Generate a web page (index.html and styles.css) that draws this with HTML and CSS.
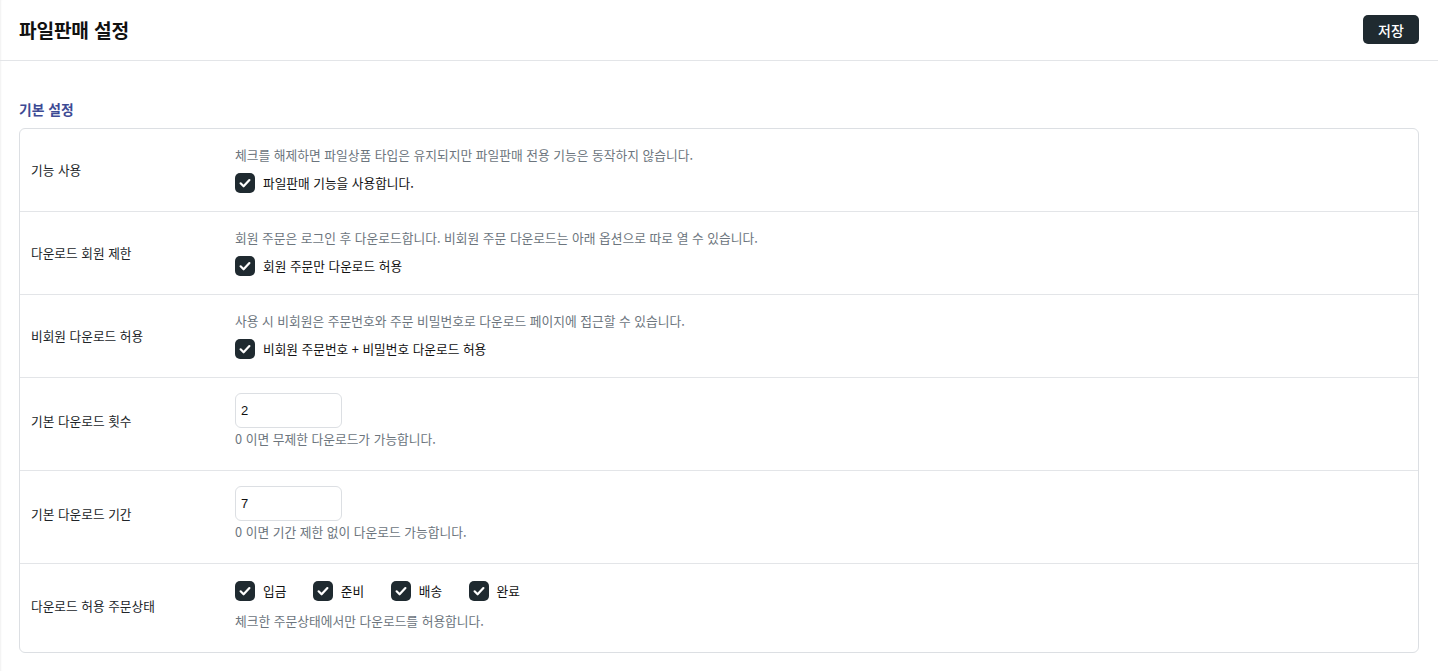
FILE: index.html
```html
<!DOCTYPE html>
<html lang="ko">
<head>
<meta charset="utf-8">
<title>파일판매 설정</title>
<link rel="stylesheet" href="styles.css">
</head>
<body>
<header class="topbar">
  <h1 class="page-title">파일판매 설정</h1>
  <button class="btn-save" type="button">저장</button>
</header>
<main class="content">
  <h2 class="section-title">기본 설정</h2>
  <div class="card">
    <div class="row">
      <div class="label">기능 사용</div>
      <div class="field">
        <p class="desc">체크를 해제하면 파일상품 타입은 유지되지만 파일판매 전용 기능은 동작하지 않습니다.</p>
        <label class="check"><span class="box"><svg viewBox="0 0 20 20"><path d="M5.6 10.3l3 3 5.8-6.2"/></svg></span>파일판매 기능을 사용합니다.</label>
      </div>
    </div>
    <div class="row">
      <div class="label">다운로드 회원 제한</div>
      <div class="field">
        <p class="desc">회원 주문은 로그인 후 다운로드합니다. 비회원 주문 다운로드는 아래 옵션으로 따로 열 수 있습니다.</p>
        <label class="check"><span class="box"><svg viewBox="0 0 20 20"><path d="M5.6 10.3l3 3 5.8-6.2"/></svg></span>회원 주문만 다운로드 허용</label>
      </div>
    </div>
    <div class="row">
      <div class="label">비회원 다운로드 허용</div>
      <div class="field">
        <p class="desc">사용 시 비회원은 주문번호와 주문 비밀번호로 다운로드 페이지에 접근할 수 있습니다.</p>
        <label class="check"><span class="box"><svg viewBox="0 0 20 20"><path d="M5.6 10.3l3 3 5.8-6.2"/></svg></span>비회원 주문번호 + 비밀번호 다운로드 허용</label>
      </div>
    </div>
    <div class="row row-input">
      <div class="label">기본 다운로드 횟수</div>
      <div class="field">
        <input class="num" type="text" value="2">
        <p class="help">0 이면 무제한 다운로드가 가능합니다.</p>
      </div>
    </div>
    <div class="row row-input">
      <div class="label">기본 다운로드 기간</div>
      <div class="field">
        <input class="num" type="text" value="7">
        <p class="help">0 이면 기간 제한 없이 다운로드 가능합니다.</p>
      </div>
    </div>
    <div class="row row-status">
      <div class="label">다운로드 허용 주문상태</div>
      <div class="field">
        <div class="check-group">
          <label class="check"><span class="box"><svg viewBox="0 0 20 20"><path d="M5.6 10.3l3 3 5.8-6.2"/></svg></span>입금</label>
          <label class="check"><span class="box"><svg viewBox="0 0 20 20"><path d="M5.6 10.3l3 3 5.8-6.2"/></svg></span>준비</label>
          <label class="check"><span class="box"><svg viewBox="0 0 20 20"><path d="M5.6 10.3l3 3 5.8-6.2"/></svg></span>배송</label>
          <label class="check"><span class="box"><svg viewBox="0 0 20 20"><path d="M5.6 10.3l3 3 5.8-6.2"/></svg></span>완료</label>
        </div>
        <p class="help help-status">체크한 주문상태에서만 다운로드를 허용합니다.</p>
      </div>
    </div>
  </div>
</main>
</body>
</html>
```
FILE: styles.css
```css
* { box-sizing: border-box; }
html, body { margin: 0; padding: 0; }
body {
  background: #fff;
  font-family: "Noto Sans CJK KR", "Noto Sans", sans-serif;
  color: #212529;
  box-shadow: inset 2px 0 2px -1px rgba(0,0,0,0.06);
  min-height: 671px;
}
.topbar {
  height: 61px;
  border-bottom: 1px solid #e3e5e8;
  display: flex;
  align-items: center;
  justify-content: space-between;
  padding: 0 19px 1px 19px;
}
.page-title {
  margin: 0;
  font-size: 19.2px;
  font-weight: 700;
  color: #111;
  letter-spacing: -0.2px;
}
.btn-save {
  width: 56px;
  height: 29px;
  background: #1f2a30;
  color: #fff;
  border: 0;
  border-radius: 5px;
  font-family: inherit;
  font-size: 14px;
  font-weight: 500;
  padding: 0;
}
.content {
  padding: 39px 19px 0 19px;
}
.section-title {
  margin: 0 0 10px 0;
  font-size: 13.8px;
  line-height: 18px;
  font-weight: 700;
  color: #3d4a94;
}
.card {
  border: 1px solid #dcdfe3;
  border-radius: 6px;
}
.row {
  display: grid;
  grid-template-columns: 215px 1fr;
  align-items: center;
  padding: 17px 12px 18px 0;
  border-bottom: 1px solid #e3e5e8;
}
.row:last-child { border-bottom: 0; }
.row-input { padding-top: 15px; padding-bottom: 22px; }
.row-status { padding-top: 17px; padding-bottom: 22px; }
.label {
  padding-left: 11px;
  font-size: 12.7px;
  color: #212529;
}
.field { display: flex; flex-direction: column; align-items: flex-start; }
.desc {
  margin: 0 0 9px 0;
  font-size: 12.75px;
  line-height: 18px;
  color: #6c757d;
}
.check {
  display: flex;
  align-items: center;
  gap: 8px;
  font-size: 12.7px;
  line-height: 20px;
  color: #111;
}
.box {
  width: 20px;
  height: 20px;
  border-radius: 5px;
  background: #1f2a30;
  display: flex;
  align-items: center;
  justify-content: center;
  flex: none;
}
.box svg { width: 20px; height: 20px; }
.box path {
  fill: none;
  stroke: #fff;
  stroke-width: 2.2;
  stroke-linecap: round;
  stroke-linejoin: round;
}
.check-group { display: flex; gap: 26.5px; }
.num {
  width: 107px;
  height: 35px;
  border: 1px solid #dcdfe3;
  border-radius: 6px;
  padding: 0 5px;
  font-family: "Liberation Sans", "Noto Sans", sans-serif;
  font-size: 13px;
  color: #111;
  outline: none;
}
.help {
  margin: 2px 0 0 0;
  font-size: 12.75px;
  line-height: 18px;
  color: #6c757d;
}
.help-status { margin-top: 11px; }
```
